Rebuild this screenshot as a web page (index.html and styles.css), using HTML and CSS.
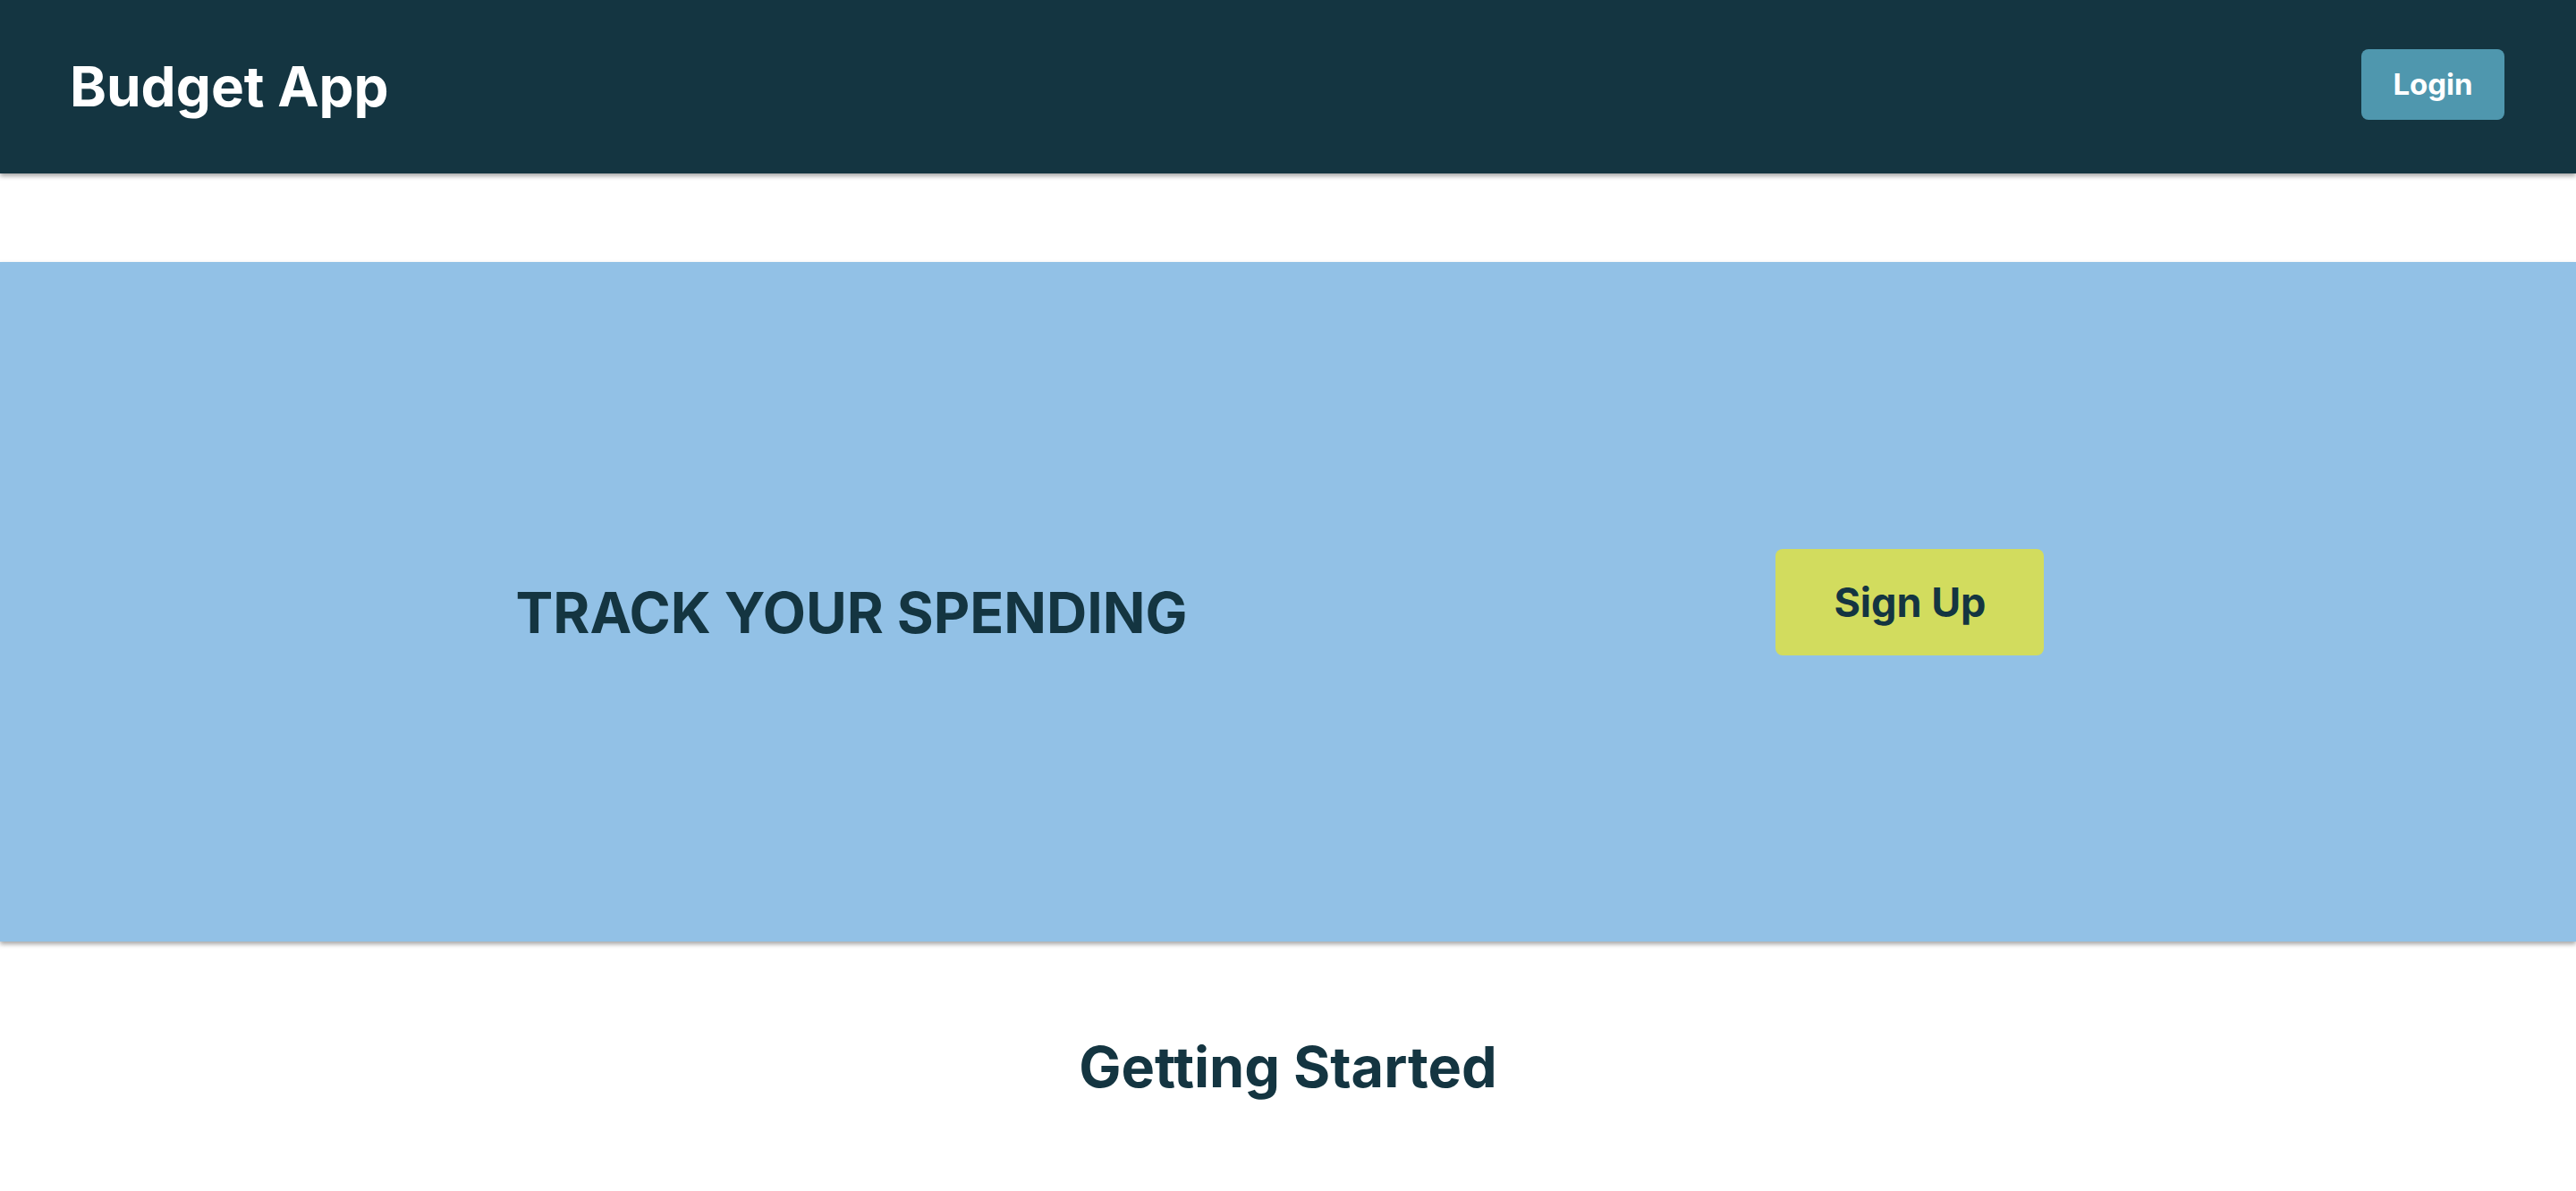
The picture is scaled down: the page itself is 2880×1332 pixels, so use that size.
FILE: index.html
```html
<!DOCTYPE html>
<html lang="en">
<head>
<meta charset="utf-8">
<title>Budget App</title>
<link rel="stylesheet" href="styles.css">
</head>
<body>
<header class="topbar">
  <h1 class="brand">Budget App</h1>
  <button class="btn-login">Login</button>
</header>
<section class="hero">
  <h2 class="hero-title">TRACK YOUR SPENDING</h2>
  <button class="btn-signup">Sign Up</button>
</section>
<section class="start">
  <h2 class="start-title">Getting Started</h2>
</section>
</body>
</html>
```
FILE: styles.css
```css
* { box-sizing: border-box; }
html, body { margin: 0; padding: 0; background: #ffffff; }
body { font-family: Inter, "Noto Sans", sans-serif; color: #143541; }

.topbar {
  height: 194px;
  background: #143541;
  display: flex;
  align-items: center;
  justify-content: space-between;
  padding: 0 80px 0 78px;
  box-shadow: 0 3px 5px rgba(0, 0, 0, 0.35);
  position: relative;
  z-index: 2;
}
.brand {
  margin: 0;
  color: #ffffff;
  font-size: 62px;
  font-weight: 700;
  line-height: 1;
}
.btn-login {
  width: 160px;
  height: 79px;
  border: none;
  border-radius: 8px;
  background: #4f97ae;
  color: #ffffff;
  font-family: Inter, "Noto Sans", sans-serif;
  font-size: 33px;
  font-weight: 700;
  margin-top: -6px;
}

.hero {
  margin-top: 99px;
  height: 760px;
  background: #92c1e6;
  display: flex;
  align-items: center;
  justify-content: center;
  gap: 658px;
  padding-right: 18px;
  box-shadow: 0 3px 5px rgba(0, 0, 0, 0.35);
}
.hero-title {
  margin: 24px 0 0 0;
  font-size: 62.6px;
  font-weight: 700;
  line-height: 1;
  color: #143541;
}
.btn-signup {
  width: 300px;
  height: 119px;
  border: none;
  border-radius: 8px;
  background: #d2dc5e;
  color: #143541;
  font-family: Inter, "Noto Sans", sans-serif;
  font-size: 45px;
  font-weight: 700;
}

.start {
  display: flex;
  justify-content: center;
  padding-top: 100px;
}
.start-title {
  margin: 0;
  font-size: 63px;
  font-weight: 700;
  line-height: 1.3;
  color: #143541;
}
```
